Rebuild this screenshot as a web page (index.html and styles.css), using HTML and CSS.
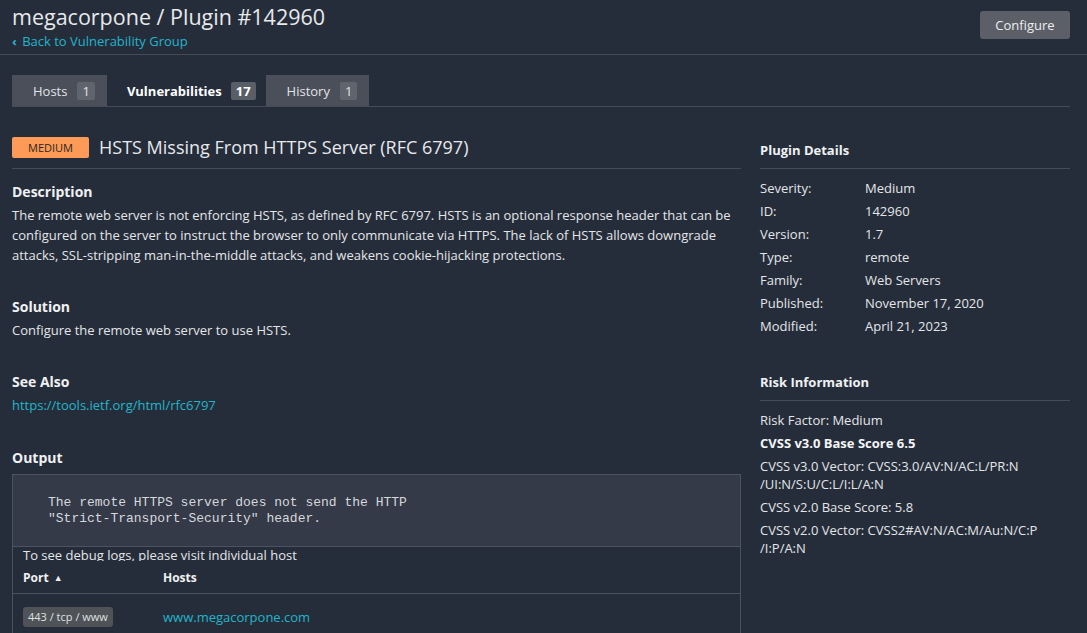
FILE: index.html
```html
<!DOCTYPE html>
<html>
<head>
<meta charset="utf-8">
<link rel="stylesheet" href="styles.css">
</head>
<body>
<header class="page-header">
  <div class="titles">
    <h1 class="page-title">megacorpone / Plugin #142960</h1>
    <a class="back-link" href="#"><span class="chev">&#8249;</span> Back to Vulnerability Group</a>
  </div>
  <button class="btn">Configure</button>
</header>

<nav class="tabs">
  <div class="tab">Hosts <span class="count">1</span></div>
  <div class="tab active">Vulnerabilities <span class="count">17</span></div>
  <div class="tab">History <span class="count">1</span></div>
</nav>

<main class="content">
  <section class="main-col">
    <div class="vuln-head">
      <span class="sev">MEDIUM</span>
      <h2 class="vuln-title">HSTS Missing From HTTPS Server (RFC 6797)</h2>
    </div>

    <div class="block">
      <h3>Description</h3>
      <p>The remote web server is not enforcing HSTS, as defined by RFC 6797. HSTS is an optional response header that can be configured on the server to instruct the browser to only communicate via HTTPS. The lack of HSTS allows downgrade attacks, SSL-stripping man-in-the-middle attacks, and weakens cookie-hijacking protections.</p>
    </div>

    <div class="block">
      <h3>Solution</h3>
      <p>Configure the remote web server to use HSTS.</p>
    </div>

    <div class="block">
      <h3>See Also</h3>
      <p><a class="link" href="#">https://tools.ietf.org/html/rfc6797</a></p>
    </div>

    <div class="block output">
      <h3>Output</h3>
      <div class="out-box">
        <pre class="out-pre">The remote HTTPS server does not send the HTTP
"Strict-Transport-Security" header.</pre>
        <div class="out-note">To see debug logs, please visit individual host</div>
        <div class="out-row out-thead">
          <div class="c-port">Port <span class="tri">&#9650;</span></div>
          <div class="c-host">Hosts</div>
        </div>
        <div class="out-row out-body">
          <div class="c-port"><span class="port">443 / tcp / www</span></div>
          <div class="c-host"><a class="link" href="#">www.megacorpone.com</a></div>
        </div>
      </div>
    </div>
  </section>

  <aside class="side-col">
    <h4 class="side-head">Plugin Details</h4>
    <dl class="details">
      <div class="drow"><dt>Severity:</dt><dd>Medium</dd></div>
      <div class="drow"><dt>ID:</dt><dd>142960</dd></div>
      <div class="drow"><dt>Version:</dt><dd>1.7</dd></div>
      <div class="drow"><dt>Type:</dt><dd>remote</dd></div>
      <div class="drow"><dt>Family:</dt><dd>Web Servers</dd></div>
      <div class="drow"><dt>Published:</dt><dd>November 17, 2020</dd></div>
      <div class="drow"><dt>Modified:</dt><dd>April 21, 2023</dd></div>
    </dl>

    <h4 class="side-head risk-head">Risk Information</h4>
    <div class="risk">
      <p>Risk Factor: Medium</p>
      <p class="strong">CVSS v3.0 Base Score 6.5</p>
      <p>CVSS v3.0 Vector: CVSS:3.0/AV:N/AC:L/PR:N<br>/UI:N/S:U/C:L/I:L/A:N</p>
      <p>CVSS v2.0 Base Score: 5.8</p>
      <p>CVSS v2.0 Vector: CVSS2#AV:N/AC:M/Au:N/C:P<br>/I:P/A:N</p>
    </div>
  </aside>
</main>
</body>
</html>
```

FILE: styles.css
```css
* { box-sizing: border-box; }
html, body { margin: 0; padding: 0; }
body {
  background: #252d3b;
  color: #e4e5e7;
  font-family: "Open Sans", "Noto Sans", sans-serif;
  font-size: 13px;
  width: 1087px;
  height: 633px;
  overflow: hidden;
}
a { text-decoration: none; }

.page-header {
  display: flex;
  justify-content: space-between;
  align-items: flex-start;
  padding: 2px 17px 4px 12px;
  border-bottom: 1px solid #454c58;
}
.page-title {
  margin: 0;
  font-size: 21.5px;
  line-height: 30px;
  font-weight: 400;
  color: #e8e9eb;
}
.back-link {
  display: block;
  color: #22b5c9;
  font-size: 13px;
  line-height: 18px;
}
.back-link .chev { font-weight: 700; margin-right: 2px; }
.btn {
  margin-top: 9px;
  height: 28px;
  width: 90px;
  border: 0;
  border-radius: 3px;
  background: #5c5f67;
  color: #eceef0;
  font-family: inherit;
  font-size: 13px;
}

.tabs {
  display: flex;
  margin: 20px 17px 0 12px;
  border-bottom: 1px solid #454c58;
}
.tab {
  display: flex;
  align-items: center;
  gap: 10px;
  height: 31px;
  padding: 0 12px 0 21px;
  background: #4a4f5a;
  color: #e2e3e6;
}
.tab.active {
  background: #252d3b;
  font-weight: 700;
  color: #fff;
  padding: 0 10px 0 20px;
  gap: 9px;
}
.count {
  display: inline-block;
  min-width: 17px;
  height: 18px;
  line-height: 18px;
  padding: 0 5px;
  text-align: center;
  background: #60646d;
  color: #e2e3e6;
  border-radius: 2px;
  font-weight: 400;
}
.tab.active .count { background: #5a5e67; font-weight: 700; color: #fff; padding: 0 5px; }

.content {
  display: flex;
  gap: 19px;
  padding: 30px 17px 0 12px;
}
.main-col { width: 729px; flex: none; }
.side-col { flex: 1; }

.vuln-head {
  display: flex;
  align-items: center;
  gap: 10px;
  padding-bottom: 10px;
  border-bottom: 1px solid #454c58;
}
.sev {
  display: inline-block;
  width: 77px;
  height: 21px;
  line-height: 21px;
  text-align: center;
  background: #fd9a57;
  color: #2b2620;
  font-size: 11px;
  border-radius: 2px;
}
.vuln-title {
  margin: 0;
  font-size: 18px;
  font-weight: 400;
  line-height: 21px;
  color: #e8e9eb;
}

.block { margin-top: 13px; }
.block + .block { margin-top: 32px; }
.block h3 {
  margin: 0;
  font-size: 14px;
  line-height: 20px;
  font-weight: 700;
  color: #f0f1f2;
}
.block p {
  margin: 3px 0 0;
  line-height: 20px;
}
.link { color: #22b5c9; }

.block.output { margin-top: 33px; }
.out-box {
  margin-top: 6px;
  border: 1px solid #4b5260;
  border-bottom: 0;
  height: 160px;
}
.out-pre {
  margin: 0;
  padding: 20px 20px 19px 35px;
  background: #343a48;
  border-bottom: 1px solid #4b5260;
  font-family: "Liberation Mono", "Courier New", monospace;
  font-size: 13px;
  line-height: 16px;
  color: #d6d8dc;
}
.out-note {
  height: 14px;
  overflow: hidden;
  padding-left: 10px;
  line-height: 17px;
  color: #e4e5e7;
}
.out-row {
  display: flex;
  align-items: center;
  padding-left: 10px;
}
.out-thead {
  height: 33px;
  padding-top: 1px;
  border-bottom: 1px solid #4b5260;
  font-weight: 700;
  font-size: 12px;
  color: #f0f1f2;
}
.out-body { height: 45px; padding-top: 0; }
.c-port { width: 140px; }
.tri { font-size: 9px; vertical-align: 1px; margin-left: 2px; }
.port {
  display: inline-block;
  height: 20px;
  line-height: 20px;
  padding: 0 5px;
  background: #4f5358;
  color: #dfe0e2;
  font-size: 11px;
  border-radius: 3px;
}

.side-head {
  margin: 0;
  padding: 3px 0 8px;
  font-size: 13px;
  line-height: 20px;
  font-weight: 700;
  color: #f0f1f2;
  border-bottom: 1px solid #454c58;
}
.details { margin: 8px 0 0; }
.drow { display: flex; line-height: 23px; }
.drow dt { width: 105px; }
.drow dd { margin: 0; }
.risk-head { margin-top: 34px; padding-top: 0; }
.risk { padding-top: 5px; }
.risk p { margin: 5px 0 0; line-height: 18px; }
.risk .strong { font-weight: 700; color: #f4f5f6; }
```
